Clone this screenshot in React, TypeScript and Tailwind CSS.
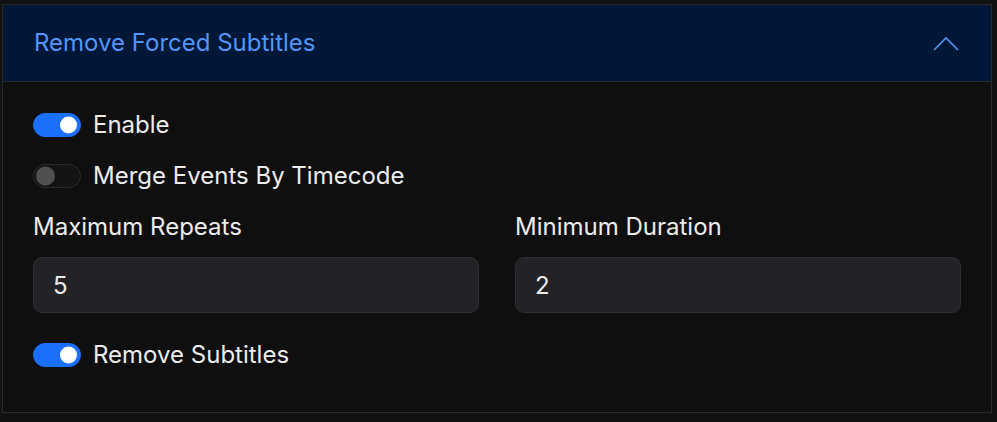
import { useState } from "react";

function Toggle({ on, onChange }: { on: boolean; onChange: () => void }) {
  return (
    <button
      onClick={onChange}
      className={
        on
          ? "relative h-6 w-12 shrink-0 rounded-full border border-[#1a6ffb] bg-[#1a6ffb]"
          : "relative h-6 w-12 shrink-0 rounded-full border border-[#2c2c2c] bg-[#141414]"
      }
    >
      <span
        className={
          on
            ? "absolute right-[3px] top-1/2 h-[17px] w-[17px] -translate-y-1/2 rounded-full bg-white"
            : "absolute left-[2px] top-1/2 h-[19px] w-[19px] -translate-y-1/2 rounded-full bg-[#505050]"
        }
      />
    </button>
  );
}

function NumberField({ label, value }: { label: string; value: string }) {
  return (
    <label className="flex flex-col">
      <span className="text-[24px] leading-[28px] text-[#ececec]">{label}</span>
      <input
        defaultValue={value}
        className="mt-[16px] h-[56px] w-full rounded-[9px] border border-[#2e2e33] bg-[#222227] px-[19px] text-[24px] text-[#ececec] outline-none"
      />
    </label>
  );
}

export default function App() {
  const [enable, setEnable] = useState(true);
  const [merge, setMerge] = useState(false);
  const [remove, setRemove] = useState(true);

  return (
    <div
      className="h-[422px] w-[997px] overflow-hidden bg-[#121212] pl-[2px] pr-[5px] pt-[4px]"
      style={{ fontFamily: "Inter, 'Noto Sans', sans-serif" }}
    >
      <div className="border border-[#2b2b2b] bg-[#0f0f0f]">
        {/* 헤더 */}
        <div className="flex h-[77px] items-center justify-between border-b border-[#2b2b2b] bg-[#001737] pl-[31px] pr-[32px]">
          <span className="text-[24px] text-[#5296f7]">Remove Forced Subtitles</span>
          <svg width="26" height="15" viewBox="0 0 26 15" fill="none">
            <path d="M1 14 L13 2 L25 14" stroke="#5296f7" strokeWidth="1.6" />
          </svg>
        </div>

        {/* 본문 */}
        <div className="flex flex-col px-[30px] pb-[45px] pt-[31px]">
          <div className="flex items-center gap-[12px]">
            <Toggle on={enable} onChange={() => setEnable(!enable)} />
            <span className="text-[24px] leading-[24px] text-[#ececec]">Enable</span>
          </div>
          <div className="mt-[27px] flex items-center gap-[12px]">
            <Toggle on={merge} onChange={() => setMerge(!merge)} />
            <span className="text-[24px] leading-[24px] text-[#ececec]">Merge Events By Timecode</span>
          </div>

          <div className="mt-[25px] grid grid-cols-2 gap-[36px]">
            <NumberField label="Maximum Repeats" value="5" />
            <NumberField label="Minimum Duration" value="2" />
          </div>

          <div className="mt-[30px] flex items-center gap-[12px]">
            <Toggle on={remove} onChange={() => setRemove(!remove)} />
            <span className="text-[24px] leading-[24px] text-[#ececec]">Remove Subtitles</span>
          </div>
        </div>
      </div>
    </div>
  );
}
